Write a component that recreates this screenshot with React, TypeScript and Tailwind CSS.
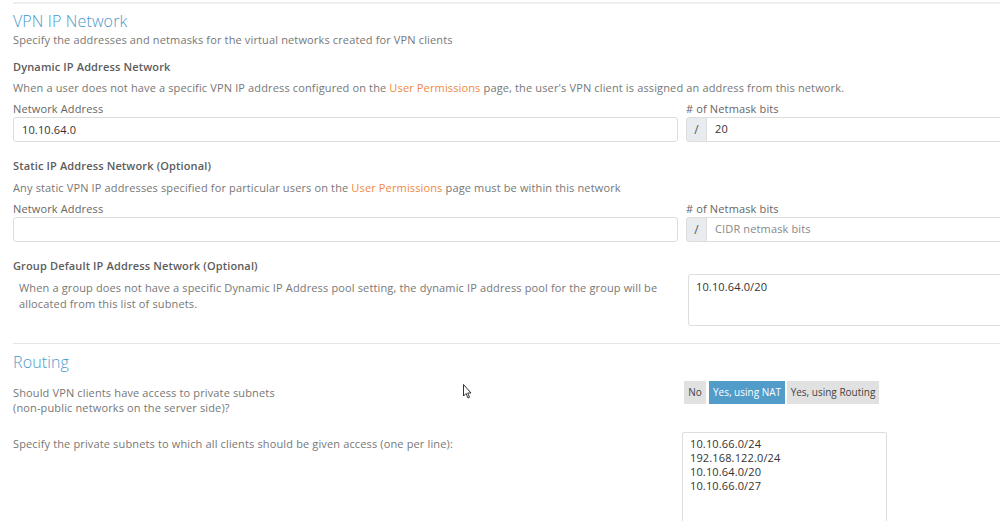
const font = { fontFamily: '"Open Sans", "Liberation Sans", sans-serif', letterSpacing: "0.14px" };

const Link = ({ children }: { children: React.ReactNode }) => (
  <span className="text-[#f0883e]">{children}</span>
);

const SubHead = ({ children }: { children: React.ReactNode }) => (
  <div className="text-[11px] font-semibold text-[#5c5c5c] leading-[14px]">{children}</div>
);

const Label = ({ children }: { children: React.ReactNode }) => (
  <div className="text-[11px] text-[#666] leading-[14px] mb-[1px]">{children}</div>
);

const TextInput = ({ value, placeholder }: { value?: string; placeholder?: string }) => (
  <input
    readOnly
    value={value ?? ""}
    placeholder={placeholder}
    className="h-[25px] w-full border border-[#ddd] rounded-[3px] px-[8px] text-[11px] text-[#333] placeholder:text-[#888] outline-none bg-white"
  />
);

const NetmaskGroup = ({ value, placeholder }: { value?: string; placeholder?: string }) => (
  <div className="flex h-[25px] w-full">
    <div className="w-[21px] shrink-0 flex items-center justify-center bg-[#e9ecef] border border-[#ddd] rounded-l-[3px] text-[12px] text-[#555]">
      /
    </div>
    <input
      readOnly
      value={value ?? ""}
      placeholder={placeholder}
      className="flex-1 min-w-0 border border-l-0 border-[#ddd] px-[8px] text-[11px] text-[#333] placeholder:text-[#888] outline-none bg-white"
    />
  </div>
);

const AddressRow = ({ net, bits, placeholder }: { net?: string; bits?: string; placeholder?: string }) => (
  <div className="grid grid-cols-[665px_1fr] gap-x-[8px]">
    <div>
      <Label>Network Address</Label>
      <TextInput value={net} />
    </div>
    <div>
      <Label># of Netmask bits</Label>
      <NetmaskGroup value={bits} placeholder={placeholder} />
    </div>
  </div>
);

export default function App() {
  return (
    <div className="h-[521px] w-[1000px] overflow-hidden bg-white" style={font}>
      <div className="w-[1040px] pl-[13px] pt-[2px] text-[11px] text-[#777]">
        <div className="border-t-2 border-[#eee]" />

        <h2 className="mt-[7px] text-[16px] leading-[20px] font-light text-[#4a9acb]">VPN IP Network</h2>
        <div className="mt-[2px] leading-[14px]">
          Specify the addresses and netmasks for the virtual networks created for VPN clients
        </div>

        <div className="mt-[13px]">
          <SubHead>Dynamic IP Address Network</SubHead>
        </div>
        <div className="mt-[7px] leading-[14px]">
          When a user does not have a specific VPN IP address configured on the <Link>User Permissions</Link> page, the
          user's VPN client is assigned an address from this network.
        </div>
        <div className="mt-[7px]">
          <AddressRow net="10.10.64.0" bits="20" />
        </div>

        <div className="mt-[17px]">
          <SubHead>Static IP Address Network (Optional)</SubHead>
        </div>
        <div className="mt-[8px] leading-[14px]">
          Any static VPN IP addresses specified for particular users on the <Link>User Permissions</Link> page must be
          within this network
        </div>
        <div className="mt-[7px]">
          <AddressRow placeholder="CIDR netmask bits" />
        </div>

        <div className="mt-[17px]">
          <SubHead>Group Default IP Address Network (Optional)</SubHead>
        </div>
        <div className="mt-[1px] grid grid-cols-[669px_1fr] gap-x-[6px]">
          <div className="pl-[6px] pt-[6px] leading-[16px]">
            When a group does not have a specific Dynamic IP Address pool setting, the dynamic IP address pool for the
            group will be allocated from this list of subnets.
          </div>
          <textarea
            readOnly
            value="10.10.64.0/20"
            className="h-[52px] resize-none border border-[#ddd] rounded-[3px] px-[7px] py-[5px] text-[11px] leading-[14px] text-[#333] outline-none"
          />
        </div>

        <div className="mt-[17px] border-t border-[#e5e5e5]" />

        <h2 className="mt-[8px] text-[16px] leading-[20px] font-light text-[#4a9acb]">Routing</h2>

        <div className="mt-[9px] grid grid-cols-[665px_1fr] gap-x-[6px] relative">
          <div className="pt-[4px] leading-[15px]">
            Should VPN clients have access to private subnets
            <br />
            (non-public networks on the server side)?
          </div>
          <div className="flex gap-[2px] h-[23px] text-[10px] tracking-normal">
            <div className="w-[22px] flex items-center justify-center bg-[#e1e1e1] text-[#444]">No</div>
            <div className="w-[76px] ml-[1px] flex items-center justify-center bg-[#519cc9] text-white">Yes, using NAT</div>
            <div className="w-[92px] flex items-center justify-center bg-[#e1e1e1] text-[#444]">Yes, using Routing</div>
          </div>
          <svg className="absolute left-[450px] top-[3px]" width="10" height="16" viewBox="0 0 10 16">
            <path d="M0.5 0.5 L0.5 12 L3 9.5 L5 14 L6.5 13.3 L4.7 9 L8 9 Z" fill="white" stroke="#333" strokeWidth="1" />
          </svg>
        </div>

        <div className="mt-[17px] grid grid-cols-[663px_1fr] gap-x-[6px]">
          <div className="pt-[5px] leading-[14px]">
            Specify the private subnets to which all clients should be given access (one per line):
          </div>
          <textarea
            readOnly
            value={"10.10.66.0/24\n192.168.122.0/24\n10.10.64.0/20\n10.10.66.0/27"}
            className="w-[205px] h-[100px] resize-none border border-[#ddd] rounded-[2px] px-[7px] py-[4px] text-[11px] leading-[14px] text-[#333] outline-none"
          />
        </div>
      </div>
    </div>
  );
}
